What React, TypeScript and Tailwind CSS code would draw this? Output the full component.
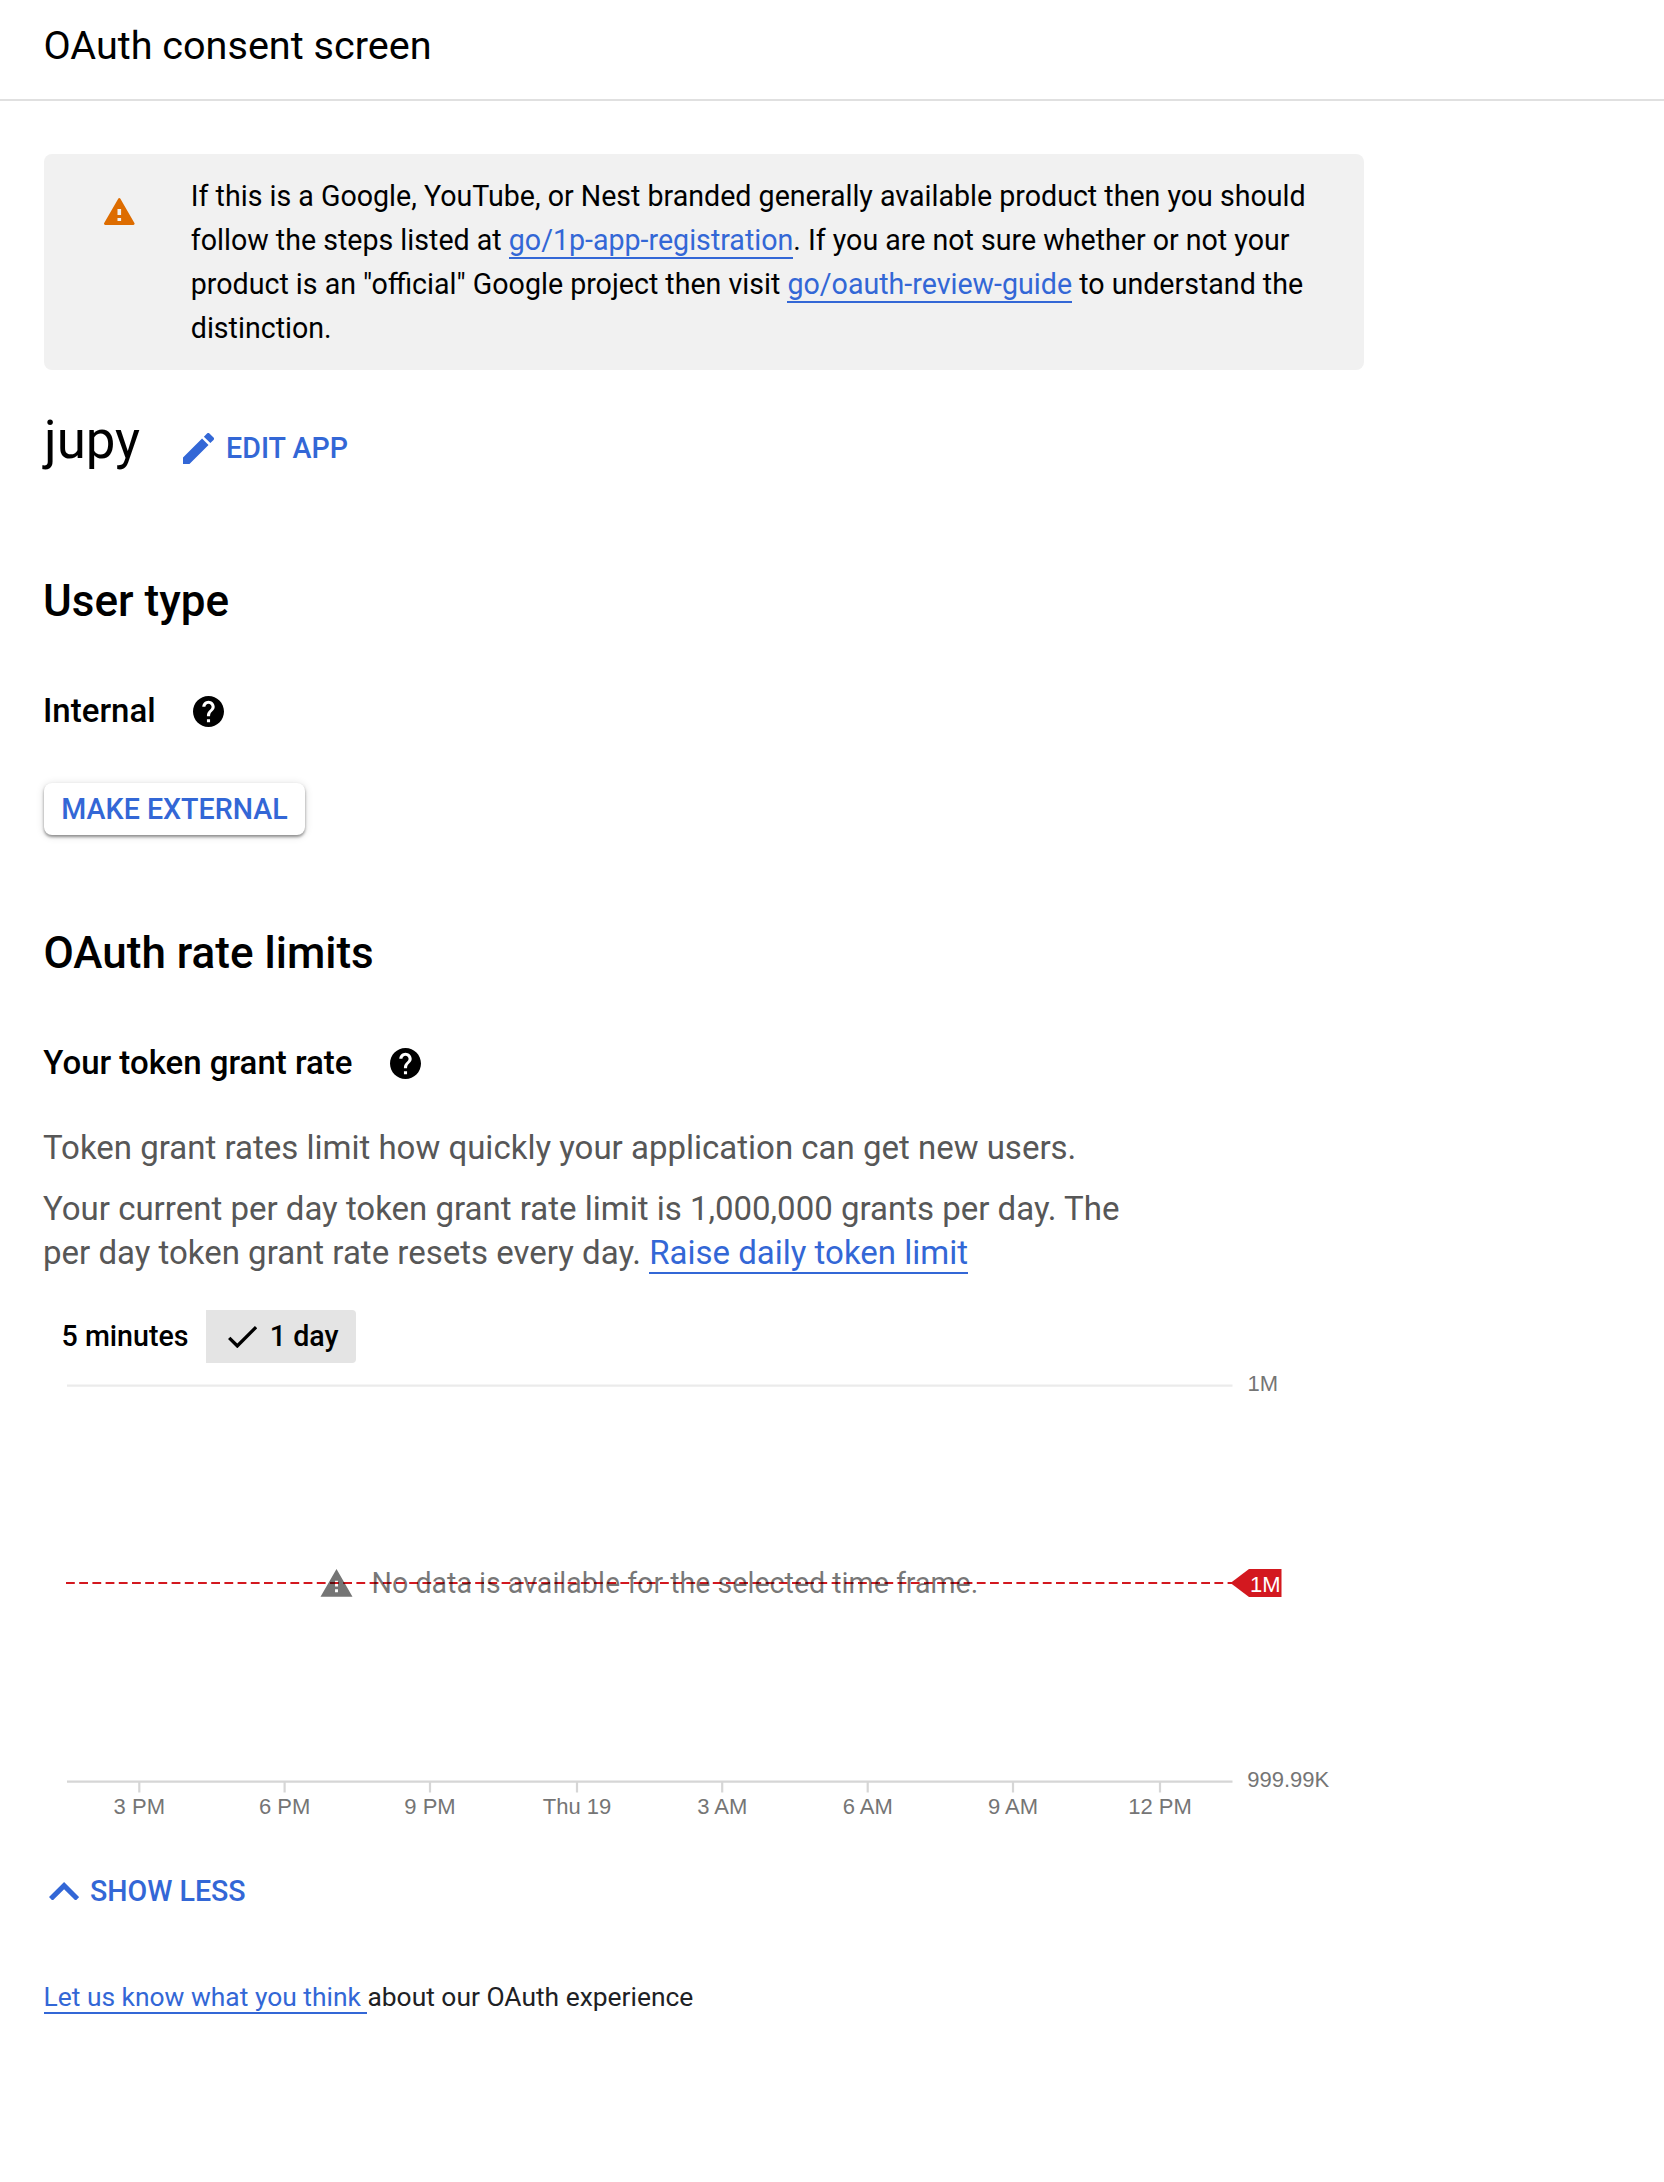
import React from 'react';

const TICKS = [
  { x: 95.3, label: '3 PM' },
  { x: 240.6, label: '6 PM' },
  { x: 386, label: '9 PM' },
  { x: 533, label: 'Thu 19' },
  { x: 678.2, label: '3 AM' },
  { x: 823.7, label: '6 AM' },
  { x: 969, label: '9 AM' },
  { x: 1116, label: '12 PM' },
];

function Link({ children }: { children: React.ReactNode }) {
  return (
    <a href="#" className="border-b-2 border-[#3367d6] text-[#3367d6]">
      {children}
    </a>
  );
}

function HelpIcon() {
  return (
    <svg viewBox="2 2 20 20" className="mt-px size-[31px] shrink-0 fill-black">
      <path d="M12 2C6.48 2 2 6.48 2 12s4.48 10 10 10 10-4.48 10-10S17.52 2 12 2zm1 17h-2v-2h2v2zm2.07-7.75l-.9.92C13.45 12.9 13 13.5 13 15h-2v-.5c0-1.1.45-2.1 1.17-2.83l1.24-1.26c.37-.36.59-.86.59-1.41 0-1.1-.9-2-2-2s-2 .9-2 2H8c0-2.21 1.79-4 4-4s4 1.79 4 4c0 .88-.36 1.68-.93 2.25z" />
    </svg>
  );
}

function Chart() {
  return (
    <svg viewBox="0 0 1320 467" className="block h-[467px] w-[1320px]">
      <line x1="23" x2="1188.5" y1="22.7" y2="22.7" stroke="#ebebeb" strokeWidth="2.2" />
      <line x1="22" x2="1188" y1="220" y2="220" stroke="#d3181f" strokeWidth="2" strokeDasharray="8.8 4.4" />
      <path
        transform="translate(275.05 203.1) scale(1.4545)"
        fill="#000"
        fillOpacity="0.54"
        d="M1 21h22L12 2 1 21zm12-3h-2v-2h2v2zm0-4h-2v-4h2v4z"
      />
      <text x="327.6" y="230" fill="#000" fillOpacity="0.54" className="font-['Roboto'] text-[28.6px]">
        No data is available for the selected time frame.
      </text>
      <polygon points="1186.5,220 1205,206 1237.5,206 1237.5,234 1205,234" fill="#d3181f" />
      <g className="font-['Liberation_Sans',Arial,sans-serif] text-[22px]" fill="#757575">
        <text x="1206" y="229" fill="#fff">1M</text>
        <text x="1203.5" y="28">1M</text>
        <text x="1203.2" y="424">999.99K</text>
        {TICKS.map((t) => (
          <React.Fragment key={t.label}>
            <line x1={t.x} x2={t.x} y1="419" y2="429.5" stroke="#d6d6d6" strokeWidth="2.2" />
            <text x={t.x} y="450.5" textAnchor="middle">
              {t.label}
            </text>
          </React.Fragment>
        ))}
      </g>
      <line x1="23" x2="1188.5" y1="418.7" y2="418.7" stroke="#d6d6d6" strokeWidth="2.2" />
    </svg>
  );
}

export default function App() {
  return (
    <div className="min-h-[2182px] w-[1664px] bg-white font-['Roboto',sans-serif] text-black">
      <header className="h-[101px] border-b-2 border-[#e0e0e0] px-[43.5px] pt-[5px]">
        <h1 className="text-[39.6px] leading-[81px]">OAuth consent screen</h1>
      </header>

      <main className="px-11 pt-[53px]">
        <div className="flex h-[216px] w-[1320px] rounded-lg bg-[#f1f1f1] pt-5 pl-[60px]">
          <svg viewBox="0 0 30.6 27" className="mt-6 h-[27px] w-[30.6px] shrink-0">
            <path
              fill="#dd6c00"
              fillRule="evenodd"
              d="M15.3 0q.6 0 .95.6L30.4 25q.4.7 0 1.3-.3.7-1.1.7H1.3q-.8 0-1.1-.7-.4-.6 0-1.3L14.35.6Q14.7 0 15.3 0zM13.5 11v5.9h3.6V11zM13.5 19.9v3h3.6v-3z"
            />
          </svg>
          <p className="ml-[56.2px] text-[28.6px] leading-[44px] whitespace-nowrap">
            If this is a Google, YouTube, or Nest branded generally available product then you should
            <br />
            follow the steps listed at <Link>go/1p-app-registration</Link>. If you are not sure whether or not your
            <br />
            product is an "official" Google project then visit <Link>go/oauth-review-guide</Link> to understand the
            <br />
            distinction.
          </p>
        </div>

        <div className="mt-10 flex h-[60px] items-start">
          <h2 className="text-[52.8px] leading-[60px]">jupy</h2>
          <button className="mt-4 ml-[43px] flex h-11 items-center gap-3 text-[28.6px] leading-[44px] font-medium text-[#3367d6]">
            <svg viewBox="3 3 18 18" className="size-[31px] fill-current">
              <path d="M3 17.25V21h3.75L17.81 9.94l-3.75-3.75L3 17.25zM20.71 7.04a.996.996 0 0 0 0-1.41l-2.34-2.34a.996.996 0 0 0-1.41 0l-1.83 1.83 3.75 3.75 1.83-1.83z" />
            </svg>
            EDIT APP
          </button>
        </div>

        <section className="mt-[105px]">
          <h2 className="-ml-px text-[44px] leading-[52px] font-medium">User type</h2>
          <div className="mt-[62px] -ml-px flex items-center gap-[37px]">
            <h3 className="text-[33px] leading-[44px] font-medium">Internal</h3>
            <HelpIcon />
          </div>
          <button className="mt-[50px] flex h-[52px] w-[261px] items-center justify-center rounded-lg bg-white text-[28.6px] font-medium whitespace-nowrap text-[#3367d6] shadow-[0_2px_3px_rgba(0,0,0,0.4),0_1px_9px_rgba(0,0,0,0.14)]">
            MAKE EXTERNAL
          </button>
        </section>

        <section className="mt-[92px]">
          <h2 className="-ml-[0.5px] text-[44px] leading-[52px] font-medium">OAuth rate limits</h2>
          <div className="mt-[62px] -ml-[0.7px] flex items-center gap-[37px]">
            <h3 className="text-[33px] leading-[44px] font-medium">Your token grant rate</h3>
            <HelpIcon />
          </div>
          <div className="mt-[41px] -ml-px text-[33px] leading-[44px] whitespace-nowrap text-[#575757]">
            <p>Token grant rates limit how quickly your application can get new users.</p>
            <p className="mt-[17px]">
              Your current per day token grant rate limit is 1,000,000 grants per day. The
              <br />
              per day token grant rate resets every day. <Link>Raise daily token limit</Link>
            </p>
          </div>

          <div className="mt-[35px] flex h-[53px] items-stretch text-[28.6px] font-medium">
            <button className="w-[162px] text-center whitespace-nowrap">5 minutes</button>
            <button className="flex w-[150px] items-center rounded-r bg-[#e4e4e4] pl-[21.5px] whitespace-nowrap">
              <svg viewBox="3.41 5.59 17.59 13.41" className="mt-px mr-[13px] h-[22.3px] w-[29.3px] fill-black">
                <path d="M9 16.17L4.83 12l-1.42 1.41L9 19 21 7l-1.41-1.41z" />
              </svg>
              1 day
            </button>
          </div>
          <Chart />
          <button className="mt-[39px] flex h-11 items-center gap-[11px] pl-[4.7px] text-[28.6px] font-medium text-[#3367d6]">
            <svg viewBox="6 8 12 7.41" className="h-[18.7px] w-[30.2px] fill-current">
              <path d="M12 8l-6 6 1.41 1.41L12 10.83l4.59 4.58L18 14z" />
            </svg>
            SHOW LESS
          </button>
        </section>

        <p className="mt-[62px] -ml-[0.5px] text-[26.4px] leading-[44px] text-[#202124]">
          <Link>Let us know what you think </Link>about our OAuth experience
        </p>
      </main>
    </div>
  );
}
